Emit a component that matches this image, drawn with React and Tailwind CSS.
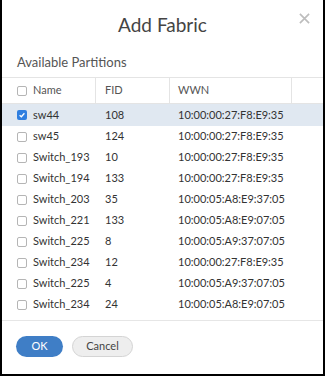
import React from 'react';

const rows = [
  { name: 'sw44', fid: '108', wwn: '10:00:00:27:F8:E9:35', checked: true },
  { name: 'sw45', fid: '124', wwn: '10:00:00:27:F8:E9:35' },
  { name: 'Switch_193', fid: '10', wwn: '10:00:00:27:F8:E9:35' },
  { name: 'Switch_194', fid: '133', wwn: '10:00:00:27:F8:E9:35' },
  { name: 'Switch_203', fid: '35', wwn: '10:00:05:A8:E9:37:05' },
  { name: 'Switch_221', fid: '133', wwn: '10:00:05:A8:E9:07:05' },
  { name: 'Switch_225', fid: '8', wwn: '10:00:05:A9:37:07:05' },
  { name: 'Switch_234', fid: '12', wwn: '10:00:00:27:F8:E9:35' },
  { name: 'Switch_225', fid: '4', wwn: '10:00:05:A9:37:07:05' },
  { name: 'Switch_234', fid: '24', wwn: '10:00:05:A8:E9:07:05' },
];

const Box = ({ checked }) =>
  checked ? (
    <span className="flex h-[10px] w-[10px] items-center justify-center rounded-[2px] bg-[#2f7fe0]">
      <svg viewBox="0 0 10 10" className="h-[8px] w-[8px]">
        <path d="M2 5.2 L4.2 7.2 L8 2.8" fill="none" stroke="white" strokeWidth="1.6" />
      </svg>
    </span>
  ) : (
    <span className="h-[10px] w-[10px] rounded-[2px] border border-[#b5b5b5] bg-white" />
  );

export default function App() {
  return (
    <div
      className="flex h-[376px] w-[325px] flex-col border-b-2 border-l-2 border-r-2 border-black bg-white text-[#333]"
      style={{ fontFamily: 'Lato, "Open Sans", sans-serif' }}
    >
      <div className="relative flex h-[50px] items-center justify-center">
        <h1 className="pt-[1px] text-[19px] text-[#444]">Add Fabric</h1>
        <svg viewBox="0 0 12 12" className="absolute right-[13px] top-[13px] h-[11px] w-[11px]">
          <path d="M1 1 L11 11 M11 1 L1 11" stroke="#bdbdbd" strokeWidth="1.8" />
        </svg>
      </div>
      <div className="h-[27px] pl-[15px] pt-[3px] text-[13px] text-[#555]">Available Partitions</div>
      <div className="grid grid-cols-[93px_74px_122px_1fr] border-y border-[#e4e4e4] text-[11px] text-[#555]">
        <div className="flex h-[25px] items-center gap-[6px] pl-[15px]">
          <Box />
          <span>Name</span>
        </div>
        <div className="flex items-center border-l border-[#e4e4e4] pl-[9px]">FID</div>
        <div className="flex items-center border-l border-[#e4e4e4] pl-[8px]">WWN</div>
        <div className="border-l border-[#e4e4e4]" />
      </div>
      <div className="flex flex-col">
        {rows.map((r, i) => (
          <div
            key={i}
            className={`grid h-[21px] grid-cols-[93px_74px_1fr] items-center text-[11px] text-[#333] ${r.checked ? 'bg-[#e0e8f1] h-[22px]' : ''}`}
          >
            <div className="flex items-center gap-[6px] pl-[15px]">
              <Box checked={r.checked} />
              <span>{r.name}</span>
            </div>
            <div className="pl-[10px]">{r.fid}</div>
            <div className="pl-[9px]">{r.wwn}</div>
          </div>
        ))}
      </div>
      <div className="mt-[5px] border-t border-[#e6e6e6]" />
      <div className="flex gap-[9px] pl-[14px] pt-[15px]">
        <button className="h-[21px] w-[47px] rounded-full bg-[#3f7ec6] text-[11px] text-white">OK</button>
        <button className="h-[21px] w-[61px] rounded-full border border-[#d4d4d4] bg-[#eeeeee] text-[11px] text-[#444]">
          Cancel
        </button>
      </div>
    </div>
  );
}
